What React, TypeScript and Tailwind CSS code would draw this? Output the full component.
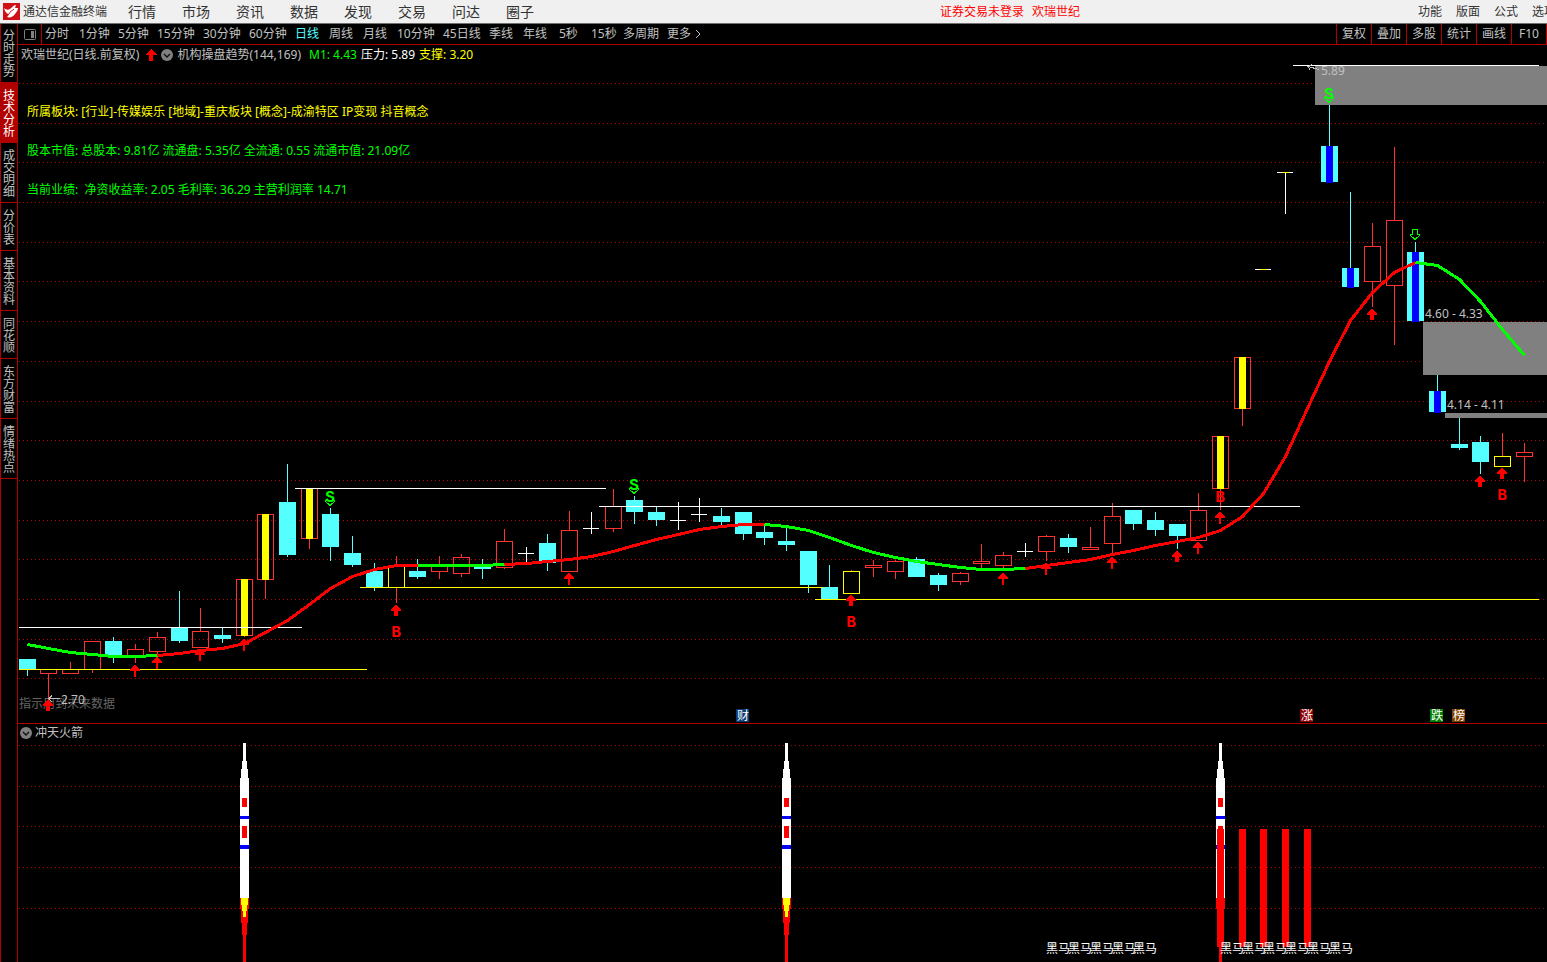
import React, { useState } from 'react';

type Kind = 'down' | 'up' | 'limit' | 'drop' | 'base' | 'doji' | 'flat';

// kind, high, body top, body bottom, low
type Candle = [Kind, number, number, number, number];

const candles: (Candle | null)[] = [
  ['down', 659, 659, 670, 676],
  ['up', 669, 669, 674, 708],
  ['up', 662, 669, 674, 674],
  ['up', 641, 641, 670, 673],
  ['down', 637, 641, 656, 663],
  ['up', 644, 649, 656, 663],
  ['up', 632, 637, 652, 656],
  ['down', 591, 627, 641, 643],
  ['up', 608, 631, 648, 648],
  ['down', 627, 635, 639, 643],
  ['limit', 579, 579, 636, 637],
  ['limit', 514, 514, 580, 599],
  ['down', 464, 502, 555, 557],
  ['limit', 488, 488, 539, 549],
  ['down', 508, 514, 547, 561],
  ['down', 536, 553, 565, 567],
  ['down', 563, 571, 588, 591],
  ['base', 556, 566, 588, 603],
  ['down', 559, 571, 577, 579],
  ['up', 556, 565, 572, 579],
  ['up', 554, 557, 574, 577],
  ['down', 559, 565, 569, 579],
  ['up', 529, 541, 568, 569],
  ['doji', 547, 553, 554, 562],
  ['down', 534, 543, 563, 571],
  ['up', 511, 530, 572, 572],
  ['doji', 512, 528, 529, 534],
  ['up', 489, 506, 529, 532],
  ['down', 496, 500, 512, 524],
  ['down', 507, 512, 520, 526],
  ['doji', 502, 520, 521, 530],
  ['doji', 498, 514, 515, 522],
  ['down', 508, 516, 522, 525],
  ['down', 512, 512, 534, 540],
  ['down', 526, 532, 538, 545],
  ['down', 527, 541, 545, 551],
  ['down', 551, 551, 585, 593],
  ['down', 565, 587, 600, 600],
  ['base', 570, 571, 594, 594],
  ['up', 560, 565, 568, 577],
  ['up', 560, 561, 572, 579],
  ['down', 557, 559, 577, 577],
  ['down', 573, 575, 585, 591],
  ['up', 572, 573, 582, 585],
  ['up', 544, 561, 564, 568],
  ['up', 552, 555, 566, 569],
  ['doji', 543, 551, 552, 557],
  ['up', 535, 536, 552, 561],
  ['down', 534, 538, 547, 553],
  ['up', 527, 547, 550, 550],
  ['up', 503, 516, 544, 553],
  ['down', 510, 510, 524, 530],
  ['down', 512, 520, 530, 536],
  ['down', 524, 524, 536, 549],
  ['up', 493, 510, 541, 541],
  ['limit', 436, 436, 489, 510],
  ['limit', 357, 357, 409, 426],
  ['flat', 269, 269, 270, 270],
  ['flat', 172, 172, 173, 214],
  null,
  ['drop', 105, 146, 182, 182],
  ['drop', 192, 268, 287, 287],
  ['up', 223, 246, 282, 307],
  ['up', 147, 220, 286, 345],
  ['drop', 242, 252, 321, 321],
  ['drop', 375, 391, 412, 412],
  ['down', 418, 444, 448, 450],
  ['down', 436, 442, 462, 474],
  ['base', 433, 456, 467, 467],
  ['up', 443, 452, 457, 482],
];

const trend = [
  644, 648, 652, 654, 656, 656, 655, 653, 650, 648, 643, 632, 620, 604, 588, 576, 569, 565, 565, 565,
  565, 565, 564, 563, 561, 559, 556, 551, 545, 539, 534, 529, 526, 524, 524, 526, 530, 537, 545, 552,
  557, 561, 564, 567, 569, 569, 568, 565, 562, 559, 554, 550, 545, 541, 537, 530, 516, 493, 456, 408,
  361, 320, 292, 272, 262, 265, 279, 301, 329, 355,
];

const trendParts = [
  { from: 0, to: 6, color: '#00ff00' },
  { from: 6, to: 18, color: '#ff0000' },
  { from: 18, to: 22, color: '#00ff00' },
  { from: 22, to: 34, color: '#ff0000' },
  { from: 34, to: 46, color: '#00ff00' },
  { from: 46, to: 64, color: '#ff0000' },
  { from: 64, to: 69, color: '#00ff00' },
];

// x1, x2, y, color
const levels: [number, number, number, string][] = [
  [19, 302, 627, '#ffffff'],
  [19, 367, 669, '#ffff00'],
  [295, 606, 488, '#ffffff'],
  [360, 823, 587, '#ffff00'],
  [599, 1300, 506, '#ffffff'],
  [815, 1539, 599, '#ffff00'],
  [1293, 1539, 65, '#ffffff'],
];

const mainGrid = [83, 123, 162, 202, 242, 281, 321, 361, 401, 440, 480, 520, 559, 599, 639, 678];
const subGrid = [745, 786, 826, 867, 908];

const boldArrows = [[1, 700], [17, 605], [38, 595], [53, 551], [62, 309], [67, 476], [68, 468]];
const thinArrows = [[5, 665], [6, 657], [8, 649], [10, 639], [25, 573], [45, 573], [47, 563], [50, 557], [54, 542], [55, 512]];
const buys = [[17, 637], [38, 627], [55, 502], [68, 500]];
const sells = [[14, 502], [28, 490], [60, 99]];

const tags = [
  { x: 736, label: '财', fill: '#0a3c73' },
  { x: 1300, label: '涨', fill: '#8b0000' },
  { x: 1430, label: '跌', fill: '#008000' },
  { x: 1452, label: '榜', fill: '#804000' },
];

const menus = ['行情', '市场', '资讯', '数据', '发现', '交易', '问达', '圈子'];
const tools = ['复权', '叠加', '多股', '统计', '画线', 'F10'];
const sideTabs = ['分时走势', '技术分析', '成交明细', '分价表', '基本资料', '同花顺', '东方财富', '情绪热点'];

const periods = [
  { label: '分时', width: 'w-[34px]' },
  { label: '1分钟', width: 'w-[39px]' },
  { label: '5分钟', width: 'w-[39px]' },
  { label: '15分钟', width: 'w-[46px]' },
  { label: '30分钟', width: 'w-[46px]' },
  { label: '60分钟', width: 'w-[46px]' },
  { label: '日线', width: 'w-[34px]' },
  { label: '周线', width: 'w-[34px]' },
  { label: '月线', width: 'w-[34px]' },
  { label: '10分钟', width: 'w-[46px]' },
  { label: '45日线', width: 'w-[46px]' },
  { label: '季线', width: 'w-[34px]' },
  { label: '年线', width: 'w-[36px]' },
  { label: '5秒', width: 'w-[32px]' },
  { label: '15秒', width: 'w-[32px]' },
  { label: '多周期', width: 'w-[44px]' },
];

const cx = (i: number) => Math.floor(27.2 + 21.697 * i);

const Logo = () => (
  <svg className="w-[17px] h-[17px] shrink-0" viewBox="0 0 17 17">
    <rect width="17" height="17" fill="#d01018" />
    <path d="M1 5 C3 7 5 7 7 6 C9 5 10 2 13 2 L12 5 L15 5 C15 8 13 9 12 11 C10 14 7 15 4 14 C5 13 6 12 6 11 C4 11 2 9 1 5 Z" fill="#ffffff" />
    <path d="M6 11 C7 8 9 8 11 6" fill="none" stroke="#d01018" strokeWidth="1" />
  </svg>
);

const Chevron = () => (
  <svg className="w-3 h-3 shrink-0" viewBox="0 0 12 12">
    <circle cx="6" cy="6" r="6" fill="#808080" />
    <path d="M3 5 L6 8 L9 5" fill="none" stroke="#101010" strokeWidth="1.4" />
  </svg>
);

const GridLines = ({ rows }: { rows: number[] }) => (
  <>
    {rows.map((y) => (
      <line key={y} x1="19" x2="105%" y1={y + 0.5} y2={y + 0.5} stroke="#b00000" strokeDasharray="1 3" />
    ))}
  </>
);

const CandleShape = ({ i, data }: { i: number; data: Candle }) => {
  const [kind, high, top, bottom, low] = data;
  const x = cx(i);

  if (kind === 'doji' || kind === 'flat') {
    return (
      <g fill="#ffffff">
        <rect x={x - 8} y={top} width="16" height="1" />
        <rect x={x} y={high} width="1" height={low - high} />
        {kind === 'flat' && <rect x={x - 3} y={top} width="7" height="1" fill="#ffff00" />}
      </g>
    );
  }

  if (kind === 'down' || kind === 'drop') {
    return (
      <g fill="#54ffff">
        <rect x={x} y={high} width="1" height={low - high} />
        <rect x={x - 8} y={top} width="17" height={bottom - top} />
        {kind === 'drop' && <rect x={x - 3} y={top} width="7" height={bottom - top + 1} fill="#0000ff" />}
      </g>
    );
  }

  return (
    <g fill="#ff3232">
      <rect x={x} y={high} width="1" height={top - high} />
      <rect x={x} y={bottom} width="1" height={low - bottom} />
      <rect x={x - 7.5} y={top + 0.5} width="16" height={bottom - top - 1} fill="none" stroke={kind === 'base' ? '#ffff00' : '#ff3232'} />
      {kind === 'limit' && <rect x={x - 3} y={top} width="7" height={bottom - top} fill="#ffff00" />}
    </g>
  );
};

const MainChart = () => (
  <svg className="w-full h-full [grid-area:1/1] text-xs" shapeRendering="crispEdges">
    <g transform="translate(-18 -45)">
      <GridLines rows={mainGrid} />
      <g fill="#808080">
        <rect x="1315" y="66" width="100%" height="39" />
        <rect x="1423" y="322" width="100%" height="53" />
        <rect x="1445" y="413" width="100%" height="5" />
      </g>
      {candles.map((c, i) => c && <CandleShape key={i} i={i} data={c} />)}
      {levels.map(([x1, x2, y, color]) => (
        <rect key={`${x1}-${y}`} x={x1} y={y} width={x2 - x1} height="1" fill={color} />
      ))}
      {trendParts.map((p) => (
        <polyline
          key={p.from}
          points={trend.slice(p.from, p.to + 1).map((y, k) => `${cx(p.from + k) + 0.5},${y + 0.5}`).join(' ')}
          fill="none"
          stroke={p.color}
          strokeWidth="3"
        />
      ))}
      <text x="19" y="708" fill="#666666">指示用到未来数据</text>
      <g fill="#ff0000">
        {boldArrows.map(([i, y]) => (
          <path key={i} transform={`translate(${cx(i)} ${y})`} d="M-1 0 h2 v1 h1 v1 h1 v1 h1 v1 h1 v2 h-3 v5 h-4 v-5 h-3 v-2 h1 v-1 h1 v-1 h1 v-1 h1 z" />
        ))}
        {thinArrows.map(([i, y]) => (
          <path key={i} transform={`translate(${cx(i)} ${y})`} d="M-1 0 h2 v1 h1 v1 h1 v1 h1 v1 h1 v2 h-4 v6 h-2 v-6 h-4 v-2 h1 v-1 h1 v-1 h1 v-1 h1 z" />
        ))}
        {buys.map(([i, y]) => (
          <text key={i} x={cx(i)} y={y} textAnchor="middle" className="text-base font-semibold font-['Liberation_Mono','Noto_Sans',monospace]">B</text>
        ))}
      </g>
      {sells.map(([i, y]) => (
        <g key={i} fill="#00ff00">
          <text x={cx(i)} y={y} textAnchor="middle" className="text-base font-semibold font-['Liberation_Mono','Noto_Sans',monospace]">S</text>
          <path transform={`translate(${cx(i)} ${y})`} d="M-4.5 -1.5 h9 v1 L0 3.5 L-4.5 -0.5 z" fill="none" stroke="#00ff00" />
        </g>
      ))}
      <path transform={`translate(${cx(64)} 229)`} d="M-2.5 0.5 h5 v5 h2 v1 L0 10.5 L-4.5 6.5 v-1 h2 z" fill="none" stroke="#00ff00" />
      <g fill="none" stroke="#c0c0c0">
        <path d="M60 698.5 H49 M52 695.5 L49 698.5 L52 702" />
        <path d="M1319 69.5 L1308 66.5 M1312 64.5 L1308 66.5 L1310 69.5" />
      </g>
      <g fill="#c0c0c0">
        <text x="61" y="704">2.70</text>
        <text x="1321" y="75">5.89</text>
        <text x="1425" y="318">4.60 - 4.33</text>
        <text x="1447" y="409">4.14 - 4.11</text>
      </g>
      {tags.map((t) => (
        <g key={t.x}>
          <rect x={t.x} y="709" width="13" height="13" fill={t.fill} />
          <text x={t.x + 1} y="720" fill="#ffffff" className="text-xs">{t.label}</text>
        </g>
      ))}
    </g>
  </svg>
);

const Rocket = ({ x }: { x: number }) => (
  <g transform={`translate(${x} 0)`}>
    <path d="M-1 743 h3 v18 h1 v8 h1 v9 h1 v120 h-9 v-120 h1 v-9 h1 v-8 h1 z" fill="#ffffff" />
    <path d="M-2 798 h5 v9 h-5 z M-2 826 h5 v12 h-5 z" fill="#ff0000" />
    <path d="M-4 816 h9 v3 h-9 z M-4 845 h9 v4 h-9 z" fill="#0000ff" />
    <path d="M-4 898 h9 v11 h-1 v14 h-1 v12 h-1 v27 h-3 v-27 h-1 v-12 h-1 v-14 h-1 z" fill="#ff0000" />
    <path d="M-3 898 h7 v7 h-1 v6 h-1 v6 h-3 v-6 h-1 v-6 h-1 z" fill="#ffff00" />
  </g>
);

const SubChart = () => (
  <svg className="w-full h-full [grid-area:1/1] text-xs" shapeRendering="crispEdges">
    <g transform="translate(-18 -724)">
      <GridLines rows={subGrid} />
      <Rocket x={244} />
      <Rocket x={786} />
      <Rocket x={1220} />
      {[55, 56, 57, 58, 59].map((i) => (
        <rect key={i} x={cx(i) - 3} y="829" width="7" height="118" fill="#ff0000" />
      ))}
      {[47, 48, 49, 50, 51, 55, 56, 57, 58, 59, 60].map((i) => (
        <text key={i} x={cx(i)} y="953" fill="#ffffff">黑马</text>
      ))}
    </g>
  </svg>
);

const App: React.FC = () => {
  const [period, setPeriod] = useState('日线');
  const [tab, setTab] = useState('技术分析');

  return (
    <div className="h-screen flex flex-col overflow-hidden bg-black text-xs text-[#c0c0c0] whitespace-nowrap font-['Noto_Sans','Noto_Sans_CJK_SC',sans-serif]">
      <header className="h-6 shrink-0 flex items-center bg-[#f0f0f0] border-b border-[#707070] pl-[3px] text-[#333333] overflow-hidden">
        <Logo />
        <h1 className="ml-[3px]">通达信金融终端</h1>
        <nav className="ml-[21px] flex gap-[26px] text-sm leading-5">
          {menus.map((m) => (
            <button key={m}>{m}</button>
          ))}
        </nav>
        <div className="ml-auto flex gap-2 text-[#ff0000]">
          <span>证券交易未登录</span>
          <span>欢瑞世纪</span>
        </div>
        <div className="ml-[338px] -mr-[9px] flex gap-[14px]">
          {['功能', '版面', '公式', '选项'].map((m) => (
            <button key={m}>{m}</button>
          ))}
        </div>
      </header>

      <div className="flex-1 min-h-0 flex">
        <aside className="w-[18px] shrink-0 border-x border-[#b00000]">
          {sideTabs.map((t) => (
            <button
              key={t}
              onClick={() => setTab(t)}
              className={`block w-full pl-[2px] pt-[7px] pb-1 first:pt-[6px] border-b border-[#b00000] leading-[12px] whitespace-normal break-all text-left ${
                tab === t ? 'bg-[#b00000] text-white' : ''
              }`}
            >
              <span className="block w-3">{t}</span>
            </button>
          ))}
        </aside>

        <main className="flex-1 min-w-0 flex flex-col">
          <div className="h-[21px] shrink-0 flex border-b border-[#b00000] leading-5">
            <div className="w-6 shrink-0 flex items-center justify-center border-r border-[#b00000]">
              <svg className="w-3 h-[11px]" viewBox="0 0 12 11">
                <rect x="0.5" y="0.5" width="11" height="10" rx="1" fill="none" stroke="#808080" />
                <rect x="7" y="2" width="3" height="7" fill="#808080" />
              </svg>
            </div>
            <div className="ml-[3px] flex">
              {periods.map((p) => (
                <button key={p.label} onClick={() => setPeriod(p.label)} className={`${p.width} text-left ${period === p.label ? 'text-[#54ffff]' : ''}`}>
                  {p.label}
                </button>
              ))}
              <button className="flex items-center gap-1">
                更多
                <svg className="w-[6px] h-[10px]" viewBox="0 0 6 10">
                  <path d="M1 1 L5 5 L1 9" fill="none" stroke="#c0c0c0" />
                </svg>
              </button>
            </div>
            <div className="ml-auto flex border-r border-[#b00000]">
              {tools.map((t) => (
                <button key={t} className="w-[35px] border-l border-[#b00000] text-center">{t}</button>
              ))}
            </div>
          </div>

          <section className="h-[679px] shrink-0 grid grid-cols-1 grid-rows-1 border-b border-[#b00000]">
            <MainChart />
            <div className="[grid-area:1/1]">
              <div className="flex items-center pl-[3px] leading-5">
                <span>欢瑞世纪(日线.前复权)</span>
                <svg className="ml-[6px] w-3 h-3" viewBox="0 0 12 12" shapeRendering="crispEdges">
                  <path d="M6 0 L12 6 H8 V12 H4 V6 H0 Z" fill="#ff0000" />
                </svg>
                <button className="ml-1 mr-1" aria-label="指标设置"><Chevron /></button>
                <span>机构操盘趋势(144,169)</span>
                <span className="ml-2 text-[#00ff00]">M1: 4.43</span>
                <span className="ml-1 text-white">压力: 5.89</span>
                <span className="ml-1 text-[#ffff00]">支撑: 3.20</span>
              </div>
              <div className="mt-[27px] pl-[9px] leading-[39px] text-[#00ff00]">
                <p className="text-[#ffff00]">所属板块: [行业]-传媒娱乐 [地域]-重庆板块 [概念]-成渝特区 IP变现 抖音概念</p>
                <p>股本市值: 总股本: 9.81亿 流通盘: 5.35亿 全流通: 0.55 流通市值: 21.09亿</p>
                <p>当前业绩:&nbsp; 净资收益率: 2.05 毛利率: 36.29 主营利润率 14.71</p>
              </div>
            </div>
          </section>

          <section className="flex-1 min-h-0 grid grid-cols-1 grid-rows-1">
            <SubChart />
            <div className="[grid-area:1/1] flex items-center gap-[3px] h-[17px] pl-[2px]">
              <button aria-label="副图设置"><Chevron /></button>
              <h2>冲天火箭</h2>
            </div>
          </section>
        </main>
      </div>
    </div>
  );
};

export default App;
